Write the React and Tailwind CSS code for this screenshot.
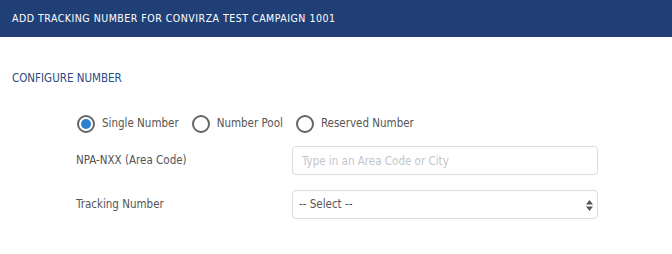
import React from 'react';

function Radio({ checked, label }) {
  return (
    <label className="flex items-center">
      <span className="w-[18px] h-[18px] rounded-full border-2 border-[#666] flex items-center justify-center bg-white">
        {checked && <span className="w-[10px] h-[10px] rounded-full bg-[#2f7fd0]"></span>}
      </span>
      <span className="ml-[7px] text-[11.5px] text-[#555]">{label}</span>
    </label>
  );
}

export default function App() {
  return (
    <div className="w-[672px] h-[254px] bg-white" style={{ fontFamily: '"DejaVu Sans Condensed", "DejaVu Sans", sans-serif' }}>
      <div className="h-[37px] bg-[#213f77] flex items-center px-[12px]">
        <h1 className="text-white text-[10.5px] tracking-[0.5px]">ADD TRACKING NUMBER FOR CONVIRZA TEST CAMPAIGN 1001</h1>
      </div>
      <div className="px-[12px] pt-[34px]">
        <h2 className="text-[11.5px] text-[#2b4a80] leading-[14px]">CONFIGURE NUMBER</h2>
      </div>
      <div className="pl-[77px] pt-[30px]">
        <div className="flex items-center gap-[13px] h-[18px]">
          <Radio checked label="Single Number" />
          <Radio label="Number Pool" />
          <Radio label="Reserved Number" />
        </div>
        <div className="flex items-center mt-[13px]">
          <span className="w-[216px] text-[11.5px] text-[#555] -ml-[1px]">NPA-NXX (Area Code)</span>
          <input
            className="w-[306px] h-[29px] border border-[#dcdce0] rounded-[4px] px-[9px] text-[11.5px] placeholder-[#c4c4cc] focus:outline-none"
            placeholder="Type in an Area Code or City"
          />
        </div>
        <div className="flex items-center mt-[15px]">
          <span className="w-[216px] text-[11.5px] text-[#555] -ml-[1px]">Tracking Number</span>
          <div className="relative w-[306px] h-[29px] border border-[#dcdce0] rounded-[4px] flex items-center px-[6px]">
            <span className="text-[11.5px] text-[#555]">-- Select --</span>
            <svg className="absolute right-[4px] top-[9px]" width="7" height="11" viewBox="0 0 7 11">
              <path d="M3.5 0 L7 4.5 L0 4.5 Z" fill="#555" />
              <path d="M0 6.5 L7 6.5 L3.5 11 Z" fill="#555" />
            </svg>
          </div>
        </div>
      </div>
    </div>
  );
}
